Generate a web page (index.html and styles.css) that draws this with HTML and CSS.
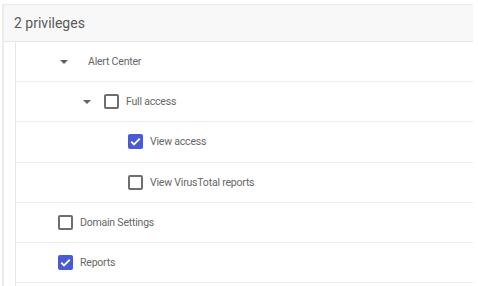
FILE: index.html
```html
<!DOCTYPE html>
<html lang="en">
<head>
    <meta charset="UTF-8">
    <meta name="viewport" content="width=device-width, initial-scale=1.0">
    <title>Privileges</title>
    <link rel="stylesheet" href="styles.css">
</head>
<body>

    <div class="panel">
        <div class="panel-header">2 privileges</div>

        <div class="priv-list">
            <div class="priv-row row-alert">
                <span class="caret caret-alert"></span>
                <span class="label">Alert Center</span>
            </div>
            <div class="priv-row row-full">
                <span class="caret caret-full"></span>
                <span class="box"></span>
                <span class="label">Full access</span>
            </div>
            <div class="priv-row row-sub">
                <span class="box checked">
                    <svg viewBox="0 0 15 15" width="15" height="15"><path d="M3.2 7.6l2.8 2.8 5.8-5.8" fill="none" stroke="#fff" stroke-width="1.8"/></svg>
                </span>
                <span class="label">View access</span>
            </div>
            <div class="priv-row row-sub">
                <span class="box"></span>
                <span class="label">View VirusTotal reports</span>
            </div>
            <div class="priv-row row-top">
                <span class="box"></span>
                <span class="label">Domain Settings</span>
            </div>
            <div class="priv-row row-top">
                <span class="box checked">
                    <svg viewBox="0 0 15 15" width="15" height="15"><path d="M3.2 7.6l2.8 2.8 5.8-5.8" fill="none" stroke="#fff" stroke-width="1.8"/></svg>
                </span>
                <span class="label">Reports</span>
            </div>
            <div class="priv-tail"></div>
        </div>
    </div>

</body>
</html>
```

FILE: styles.css
```css
body {
    font-family: Roboto, "Liberation Sans", sans-serif;
    margin: 0;
    padding-top: 4px;
    background: #fff;
    color: #616161;
}
.panel {
    margin-left: 2px;
    width: 469px;
    border-left: 2px solid #ececec;
}
.panel-header {
    height: 35px;
    line-height: 35px;
    padding-top: 1px;
    padding-left: 10px;
    background-color: #f8f8f8;
    border-top: 1px solid #ebebeb;
    border-bottom: 1px solid #e6e6e6;
    font-size: 14px;
    color: #5a5a5a;
}
.priv-list {
    margin-left: 11px;
    border-left: 1px solid #e8e8e8;
}
.priv-row {
    display: flex;
    align-items: center;
    height: 39.2px;
    border-bottom: 1px solid #ececec;
    font-size: 10.5px;
    letter-spacing: -0.2px;
}
.priv-row .label {
    color: #666;
}
.priv-tail {
    height: 10px;
}
.caret {
    width: 0;
    height: 0;
    border-left: 4px solid transparent;
    border-right: 4px solid transparent;
    border-top: 4px solid #616161;
}
.row-alert {
    padding-left: 44px;
}
.caret-alert {
    margin-right: 20px;
}
.row-full {
    padding-left: 67px;
}
.caret-full {
    margin-right: 13px;
}
.row-sub {
    padding-left: 112px;
}
.row-top {
    padding-left: 42px;
}
.box {
    box-sizing: border-box;
    width: 15px;
    height: 15px;
    border: 2px solid #6e6e6e;
    border-radius: 2px;
    margin-right: 7px;
    flex-shrink: 0;
}
.box.checked {
    border: none;
    background-color: #4a5ad2;
}
.box svg {
    display: block;
}
```
